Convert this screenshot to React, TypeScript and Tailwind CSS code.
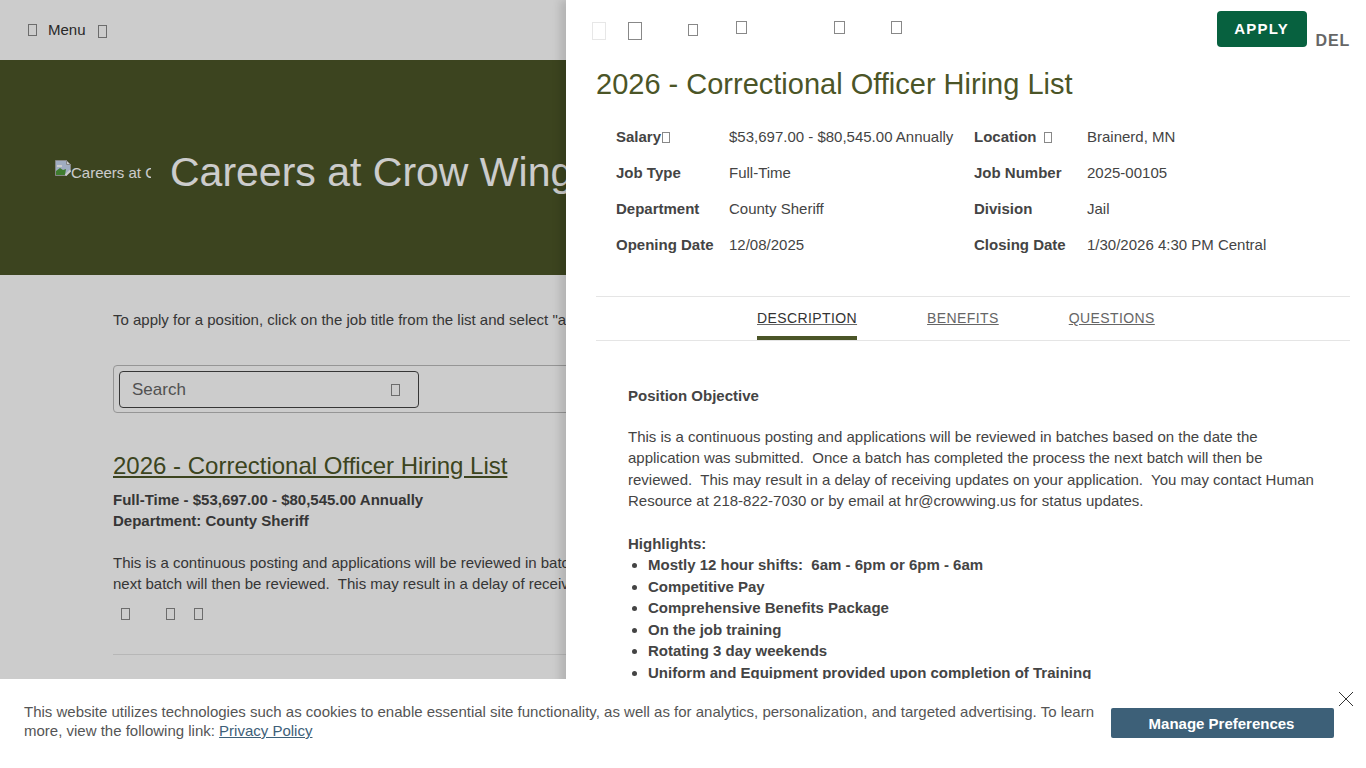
import React from 'react';

const Tofu = ({ className = 'w-[9px] h-[12px]' }: { className?: string }) => (
  <span className={`inline-block border border-[#555] opacity-70 ${className}`} />
);

const BrokenImage = () => (
  <svg width="16" height="16" viewBox="0 0 16 16" className="shrink-0">
    <path d="M0.5 0.5h11l4 4v6l-5 5H0.5z" fill="#c9d8f2" stroke="#a8a8a8" />
    <path d="M11.5 0.5v4h4z" fill="#fff" stroke="#a8a8a8" />
    <path d="M1 15v-4l4-3 3 2 3-1-1 6z" fill="#4f9a3a" />
    <path d="M2 5h5v2H2z" fill="#fff" />
    <path d="M15.5 10.5l-5 5" stroke="#fff" strokeWidth="2" />
  </svg>
);

const facts = [
  ['Job Type', 'Full-Time', 'Job Number', '2025-00105'],
  ['Department', 'County Sheriff', 'Division', 'Jail'],
  ['Opening Date', '12/08/2025', 'Closing Date', '1/30/2026 4:30 PM Central'],
];

export default function App() {
  return (
    <div className="relative h-[768px] w-full overflow-hidden bg-white font-['Liberation_Sans',Arial,sans-serif] text-[#444]">
      {/* page behind the drawer */}
      <div className="flex h-[60px] items-center bg-white pl-[28px]">
        <Tofu />
        <span className="ml-[11px] text-[15px] text-[#333]">Menu</span>
        <Tofu className="ml-[12px] mt-[3px] h-[13px] w-[9px]" />
      </div>
      <div className="flex h-[215px] items-center bg-[#4b5527] pl-[55px] pt-[10px] text-white">
        <div className="flex w-[96px] items-start overflow-hidden whitespace-nowrap text-[15px]">
          <BrokenImage />
          <span className="mt-[2px]">Careers at Crow</span>
        </div>
        <h1 className="ml-[19px] whitespace-nowrap text-[41px]">Careers at Crow Wing County</h1>
      </div>
      <div className="px-[113px] pt-[34px]">
        <p className="whitespace-nowrap text-[15px]">
          To apply for a position, click on the job title from the list and select "apply" on the job posting page.
        </p>
        <div className="mt-[33px] flex h-[48px] items-center rounded-[4px] border border-[#bbb] pl-[5px] pt-[2px]">
          <div className="flex h-[37px] w-[300px] items-center justify-between rounded-[4px] border border-[#444] pl-[12px] pr-[18px] text-[17px] text-[#666]">
            Search
            <Tofu />
          </div>
        </div>
        <a className="mt-[36px] block whitespace-nowrap text-[24px] leading-[34px] text-[#4b5527] underline">
          2026 - Correctional Officer Hiring List
        </a>
        <div className="mt-[6px] whitespace-nowrap text-[15px] font-bold leading-[21.5px]">
          <div>Full-Time - $53,697.00 - $80,545.00 Annually</div>
          <div>Department: County Sheriff</div>
        </div>
        <p className="mt-[20px] whitespace-nowrap text-[15px] leading-[21.5px]">
          This is a continuous posting and applications will be reviewed in batches based on the date the
          <br />
          next batch will then be reviewed.&nbsp; This may result in a delay of receiving updates on your application.
        </p>
        <div className="mt-[13px] flex items-center pl-[8px]">
          <Tofu />
          <Tofu className="ml-[36px] h-[12px] w-[9px]" />
          <Tofu className="ml-[19px] h-[12px] w-[9px]" />
        </div>
        <div className="mt-[34px] border-t border-[#e5e5e5]" />
      </div>

      {/* dim layer */}
      <div className="absolute inset-0 bg-black/20" />

      {/* job drawer */}
      <aside className="absolute bottom-0 right-0 top-0 w-[800px] bg-white shadow-[-6px_0_8px_rgba(0,0,0,0.12)]">
        <div className="flex h-[60px] items-start pl-[26px] pr-[16px]">
          <div className="flex flex-1 items-start pt-[22px]">
            <Tofu className="h-[18px] w-[14px] !border-[#ddd]" />
            <Tofu className="ml-[22px] h-[18px] w-[14px]" />
            <Tofu className="ml-[46px] mt-[2px] h-[12px] w-[10px]" />
            <Tofu className="ml-[38px] -mt-[1px] h-[13px] w-[11px]" />
            <Tofu className="ml-[87px] -mt-[1px] h-[13px] w-[11px]" />
            <Tofu className="ml-[46px] -mt-[1px] h-[13px] w-[11px]" />
          </div>
          <button className="mt-[11px] h-[36px] w-[90px] rounded-[4px] bg-[#07613f] text-[15px] font-bold tracking-[1.2px] text-white">
            APPLY
          </button>
          <span className="ml-[9px] mt-[32px] text-[16px] font-bold leading-[18px] tracking-[0.8px] text-[#666]">DEL</span>
        </div>
        <div className="pl-[30px] pr-[16px]">
          <h2 className="mt-[6px] whitespace-nowrap text-[29px] leading-[36px] text-[#4b5527]">
            2026 - Correctional Officer Hiring List
          </h2>
          <div className="mt-[17px] grid grid-cols-[113px_245px_113px_1fr] pl-[20px] text-[15px] leading-[36px]">
            <b className="flex items-center">Salary<Tofu className="ml-[1px] h-[11px] w-[8px]" /></b>
            <span className="whitespace-nowrap">$53,697.00 - $80,545.00 Annually</span>
            <b className="flex items-center">Location<Tofu className="ml-[7px] h-[11px] w-[8px]" /></b>
            <span>Brainerd, MN</span>
            {facts.map((row) =>
              row.map((cell, i) =>
                i % 2 === 0 ? <b key={cell}>{cell}</b> : <span key={cell}>{cell}</span>,
              ),
            )}
          </div>
          <div className="mt-[33px] border-t border-[#e5e5e5]">
            <nav className="flex h-[44px] gap-[70px] border-b border-[#e5e5e5] pl-[161px] pt-[11px] text-[14px] tracking-[0.4px] text-[#666] underline">
              <span className="h-[32px] border-b-4 border-[#4b5527] text-[#333]">DESCRIPTION</span>
              <span>BENEFITS</span>
              <span>QUESTIONS</span>
            </nav>
          </div>
          <div className="pl-[32px] pr-[30px] pt-[44px] text-[15px] leading-[21.5px]">
            <b>Position Objective</b>
            <p className="mt-[19px]">
              This is a continuous posting and applications will be reviewed in batches based on the date the application was submitted.&nbsp; Once a batch has completed the process the next batch will then be reviewed.&nbsp; This may result in a delay of receiving updates on your application.&nbsp; You may contact Human Resource at 218-822-7030 or by email at hr@crowwing.us for status updates.
            </p>
            <p className="mt-[21px] font-bold">Highlights:</p>
            <ul className="list-disc pl-[20px] font-bold">
              <li>Mostly 12 hour shifts:&nbsp; 6am - 6pm or 6pm - 6am</li>
              <li>Competitive Pay</li>
              <li>Comprehensive Benefits Package</li>
              <li>On the job training</li>
              <li>Rotating 3 day weekends</li>
              <li>Uniform and Equipment provided upon completion of Training</li>
            </ul>
          </div>
        </div>
      </aside>

      {/* cookie notice */}
      <div className="absolute bottom-0 left-0 right-0 flex h-[89px] items-start bg-white pl-[24px] pr-[32px]">
        <p className="mt-[23px] w-[1087px] text-[15px] leading-[19px] text-[#555]">
          This website utilizes technologies such as cookies to enable essential site functionality, as well as for analytics, personalization, and targeted advertising. To learn more, view the following link: <a className="text-[#3d6078] underline">Privacy Policy</a>
        </p>
        <button className="mt-[29px] h-[30px] w-[223px] rounded-[2px] bg-[#3d6078] pr-[2px] pt-[2px] text-[15px] font-bold text-white">
          Manage Preferences
        </button>
        <svg className="absolute right-[12px] top-[12px]" width="16" height="16" viewBox="0 0 16 16">
          <path d="M1 1l14 14M15 1L1 15" stroke="#333" strokeWidth="1" />
        </svg>
      </div>
    </div>
  );
}
